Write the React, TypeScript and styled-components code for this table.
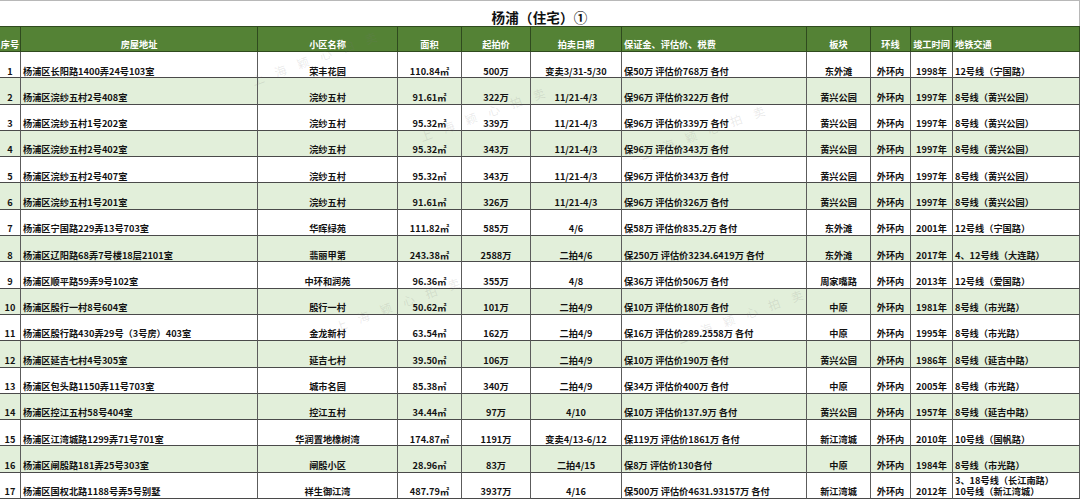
import styled, { createGlobalStyle } from "styled-components";

const GlobalStyle = createGlobalStyle`
  html, body {
    margin: 0;
    padding: 0;
    background: #ffffff;
  }
  body {
    font-family: "Noto Sans CJK SC", "Noto Sans", sans-serif;
  }
`;

type Align = "left" | "center";

const COLUMNS: { title: string; align: Align; headAlign: Align }[] = [
  { title: "序号", align: "center", headAlign: "center" },
  { title: "房屋地址", align: "left", headAlign: "center" },
  { title: "小区名称", align: "center", headAlign: "center" },
  { title: "面积", align: "center", headAlign: "center" },
  { title: "起拍价", align: "center", headAlign: "center" },
  { title: "拍卖日期", align: "center", headAlign: "center" },
  { title: "保证金、评估价、税费", align: "left", headAlign: "left" },
  { title: "板块", align: "center", headAlign: "center" },
  { title: "环线", align: "center", headAlign: "center" },
  { title: "竣工时间", align: "center", headAlign: "center" },
  { title: "地铁交通", align: "left", headAlign: "left" },
];

const ROWS: string[][] = [
  ["1", "杨浦区长阳路1400弄24号103室", "荣丰花园", "110.84㎡", "500万", "变卖3/31-5/30", "保50万 评估价768万 各付", "东外滩", "外环内", "1998年", "12号线（宁国路）"],
  ["2", "杨浦区浣纱五村2号408室", "浣纱五村", "91.61㎡", "322万", "11/21-4/3", "保96万 评估价322万 各付", "黄兴公园", "外环内", "1997年", "8号线（黄兴公园）"],
  ["3", "杨浦区浣纱五村1号202室", "浣纱五村", "95.32㎡", "339万", "11/21-4/3", "保96万 评估价339万 各付", "黄兴公园", "外环内", "1997年", "8号线（黄兴公园）"],
  ["4", "杨浦区浣纱五村2号402室", "浣纱五村", "95.32㎡", "343万", "11/21-4/3", "保96万 评估价343万 各付", "黄兴公园", "外环内", "1997年", "8号线（黄兴公园）"],
  ["5", "杨浦区浣纱五村2号407室", "浣纱五村", "95.32㎡", "343万", "11/21-4/3", "保96万 评估价343万 各付", "黄兴公园", "外环内", "1997年", "8号线（黄兴公园）"],
  ["6", "杨浦区浣纱五村1号201室", "浣纱五村", "91.61㎡", "326万", "11/21-4/3", "保96万 评估价326万 各付", "黄兴公园", "外环内", "1997年", "8号线（黄兴公园）"],
  ["7", "杨浦区宁国路229弄13号703室", "华晖绿苑", "111.82㎡", "585万", "4/6", "保58万 评估价835.2万 各付", "东外滩", "外环内", "2001年", "12号线（宁国路）"],
  ["8", "杨浦区辽阳路68弄7号楼18层2101室", "翡丽甲第", "243.38㎡", "2588万", "二拍4/6", "保250万 评估价3234.6419万 各付", "东外滩", "外环内", "2017年", "4、12号线（大连路）"],
  ["9", "杨浦区顺平路59弄9号102室", "中环和润苑", "96.36㎡", "355万", "4/8", "保36万 评估价506万 各付", "周家嘴路", "外环内", "2013年", "12号线（爱国路）"],
  ["10", "杨浦区殷行一村8号604室", "殷行一村", "50.62㎡", "101万", "二拍4/9", "保10万 评估价180万 各付", "中原", "外环内", "1981年", "8号线（市光路）"],
  ["11", "杨浦区殷行路430弄29号（3号房）403室", "金龙新村", "63.54㎡", "162万", "二拍4/9", "保16万 评估价289.2558万 各付", "中原", "外环内", "1995年", "8号线（市光路）"],
  ["12", "杨浦区延吉七村4号305室", "延吉七村", "39.50㎡", "106万", "二拍4/9", "保10万 评估价190万 各付", "黄兴公园", "外环内", "1986年", "8号线（延吉中路）"],
  ["13", "杨浦区包头路1150弄11号703室", "城市名园", "85.38㎡", "340万", "二拍4/9", "保34万 评估价400万 各付", "中原", "外环内", "2005年", "8号线（市光路）"],
  ["14", "杨浦区控江五村58号404室", "控江五村", "34.44㎡", "97万", "4/10", "保10万 评估价137.9万 各付", "黄兴公园", "外环内", "1957年", "8号线（延吉中路）"],
  ["15", "杨浦区江湾城路1299弄71号701室", "华润置地橡树湾", "174.87㎡", "1191万", "变卖4/13-6/12", "保119万 评估价1861万 各付", "新江湾城", "外环内", "2010年", "10号线（国帆路）"],
  ["16", "杨浦区闸殷路181弄25号303室", "闸殷小区", "28.96㎡", "83万", "二拍4/15", "保8万 评估价130各付", "中原", "外环内", "1984年", "8号线（市光路）"],
  ["17", "杨浦区国权北路1188号弄5号别墅", "祥生御江湾", "487.79㎡", "3937万", "4/16", "保500万 评估价4631.93157万 各付", "新江湾城", "外环内", "2012年", "3、18号线（长江南路）\n10号线（新江湾城）"],
];

// faint diagonal stamp text laid over the sheet
const WATERMARKS = [
  { x: 252, y: 72 },
  { x: 420, y: 128 },
  { x: 640, y: 146 },
  { x: 335, y: 318 },
  { x: 678, y: 330 },
];

const Sheet = styled.div`
  position: relative;
  width: 1080px;
  height: 499px;
  overflow: hidden;
  display: grid;
  grid-template-columns: 21px 237px 140px 64px 69px 91px 185px 64px 40px 42px 127px;
  grid-template-rows: 26px 26px;
  grid-auto-rows: 26.3px;
  font-family: "Noto Sans CJK SC", "Noto Sans", sans-serif;
  font-weight: 700;
  color: #121212;
`;

const TitleBar = styled.div`
  grid-column: 1 / -1;
  display: flex;
  align-items: flex-end;
  justify-content: center;
  border-top: 1px solid #b8b8b8;
  border-right: 1px solid #b8b8b8;
  font-size: 13.5px;
  line-height: 17px;
  color: #111111;
  letter-spacing: 0.2px;
`;

const HeadCell = styled.div<{ $align: Align }>`
  display: flex;
  align-items: flex-end;
  justify-content: ${(p) => (p.$align === "left" ? "flex-start" : "center")};
  padding: 0 2px 1px;
  background: #548235;
  color: #ffffff;
  font-size: 9.2px;
  line-height: 11px;
  white-space: nowrap;
  border-top: 1px solid #2f4a1e;
  border-right: 1px solid #2f4a1e;
  border-bottom: 1px solid #2f4a1e;
`;

const Cell = styled.div<{ $align: Align; $shade: boolean }>`
  display: flex;
  align-items: flex-end;
  justify-content: ${(p) => (p.$align === "left" ? "flex-start" : "center")};
  padding: 0 2px 0.5px;
  background: ${(p) => (p.$shade ? "#e2efda" : "#ffffff")};
  font-size: 9.2px;
  line-height: 11.3px;
  white-space: pre;
  text-align: left;
  border-right: 1px solid #5c5c5c;
  border-bottom: 1px solid #4a4a4a;
`;

const Watermark = styled.div<{ $x: number; $y: number }>`
  position: absolute;
  left: ${(p) => p.$x}px;
  top: ${(p) => p.$y}px;
  transform: rotate(-20deg);
  transform-origin: left center;
  font-size: 12px;
  font-weight: 400;
  letter-spacing: 12px;
  color: rgba(120, 120, 120, 0.16);
  white-space: nowrap;
  pointer-events: none;
`;

export default function App() {
  return (
    <>
      <GlobalStyle />
      <Sheet>
        <TitleBar>杨浦（住宅）①</TitleBar>
        {COLUMNS.map((c) => (
          <HeadCell key={c.title} $align={c.headAlign}>
            {c.title}
          </HeadCell>
        ))}
        {ROWS.map((row, r) =>
          row.map((value, i) => (
            <Cell key={`${r}-${i}`} $align={COLUMNS[i].align} $shade={r % 2 === 1}>
              {value}
            </Cell>
          ))
        )}
        {WATERMARKS.map((w) => (
          <Watermark key={`${w.x}-${w.y}`} $x={w.x} $y={w.y}>
            上海颖心拍卖
          </Watermark>
        ))}
      </Sheet>
    </>
  );
}
